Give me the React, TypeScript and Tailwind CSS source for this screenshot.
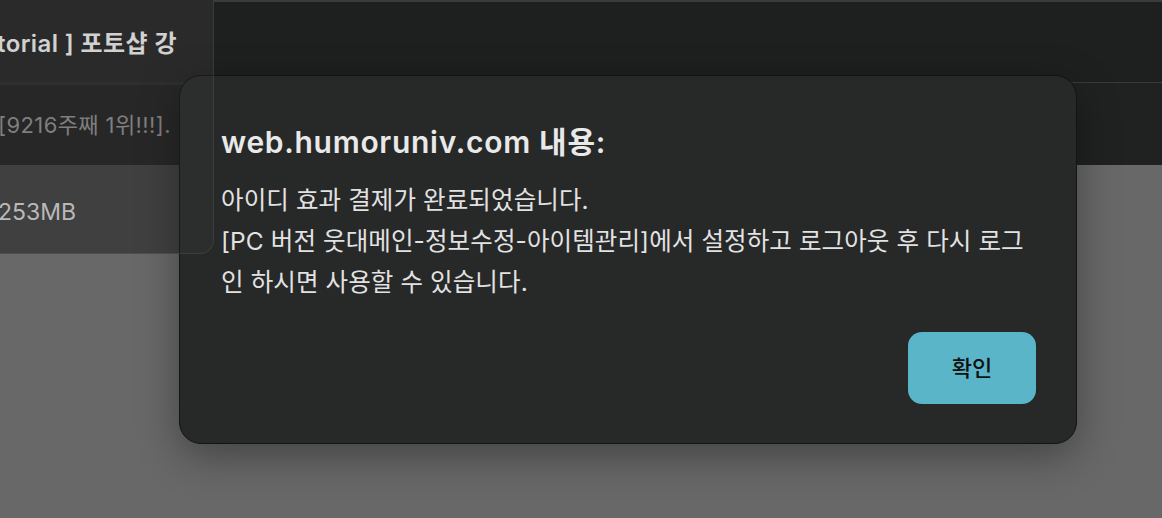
import React from "react";

export default function App() {
  const font = "font-['Inter','Noto_Sans_CJK_KR',sans-serif]";
  return (
    <div className={`relative w-[1162px] h-[518px] overflow-hidden bg-[#686868] ${font}`}>
      {/* page layer */}
      <div className="flex flex-col">
        <div className="h-[82px] border-t-2 border-[#3b3b3b] bg-[#1e1f1f]" />
        <div className="h-[83px] border-t border-[#3a3a3a] bg-[#202121]" />
      </div>

      {/* dropdown list under the dialog */}
      <div className="absolute left-0 top-0 w-[214px] flex flex-col overflow-hidden rounded-br-[14px]">
        <div className="h-[82px] pt-[6px] bg-[#252525] flex items-center whitespace-nowrap">
          <span className="ml-[-3px] text-[24px] font-semibold tracking-[0.4px] text-[#d0d0d0]">torial ] 포토샵 강</span>
        </div>
        <div className="h-[83px] border-t-[3px] border-[#2a2a2a] bg-[#222222] flex items-center whitespace-nowrap">
          <span className="ml-[-2px] text-[22px] tracking-[0.4px] text-[#7c7c7c]">[9216주째 1위!!!].</span>
        </div>
        <div className="h-[89px] pt-[6px] bg-[#3c3c3c] flex items-center whitespace-nowrap">
          <span className="ml-[-2px] text-[23px] text-[#b8b8b8]">253MB</span>
        </div>
      </div>

      {/* dialog */}
      <div className="absolute left-[179px] top-[75px] w-[898px] h-[369px] rounded-[22px] border border-[#141414] bg-[#272828] shadow-[0_12px_40px_rgba(0,0,0,0.35)] flex flex-col pl-[41px] pr-[40px] pt-[47px] pb-[39px]">
        <div className="text-[30px] leading-[38px] font-semibold text-[#e9e9e9] tracking-[0.7px]">
          web.humoruniv.com 내용:
        </div>
        <div className="mt-[19px] mr-[12px] text-[24.5px] leading-[41px] tracking-[0.1px] text-[#e2e2e2]">
          아이디 효과 결제가 완료되었습니다.
          <br />
          [PC 버전 웃대메인-정보수정-아이템관리]에서 설정하고 로그아웃 후 다시 로그인 하시면 사용할 수 있습니다.
        </div>
        <div className="mt-auto flex justify-end">
          <button className="w-[128px] h-[72px] rounded-[14px] bg-[#5ab5c9] text-[22px] font-medium text-[#111]">
            확인
          </button>
        </div>
      </div>

      {/* translucent frame of the dropdown over everything */}
      <div className="absolute left-[-20px] top-[-14px] w-[234px] h-[268px] rounded-[14px] border border-[#ffffff14] bg-[#ffffff06] pointer-events-none" />
    </div>
  );
}
